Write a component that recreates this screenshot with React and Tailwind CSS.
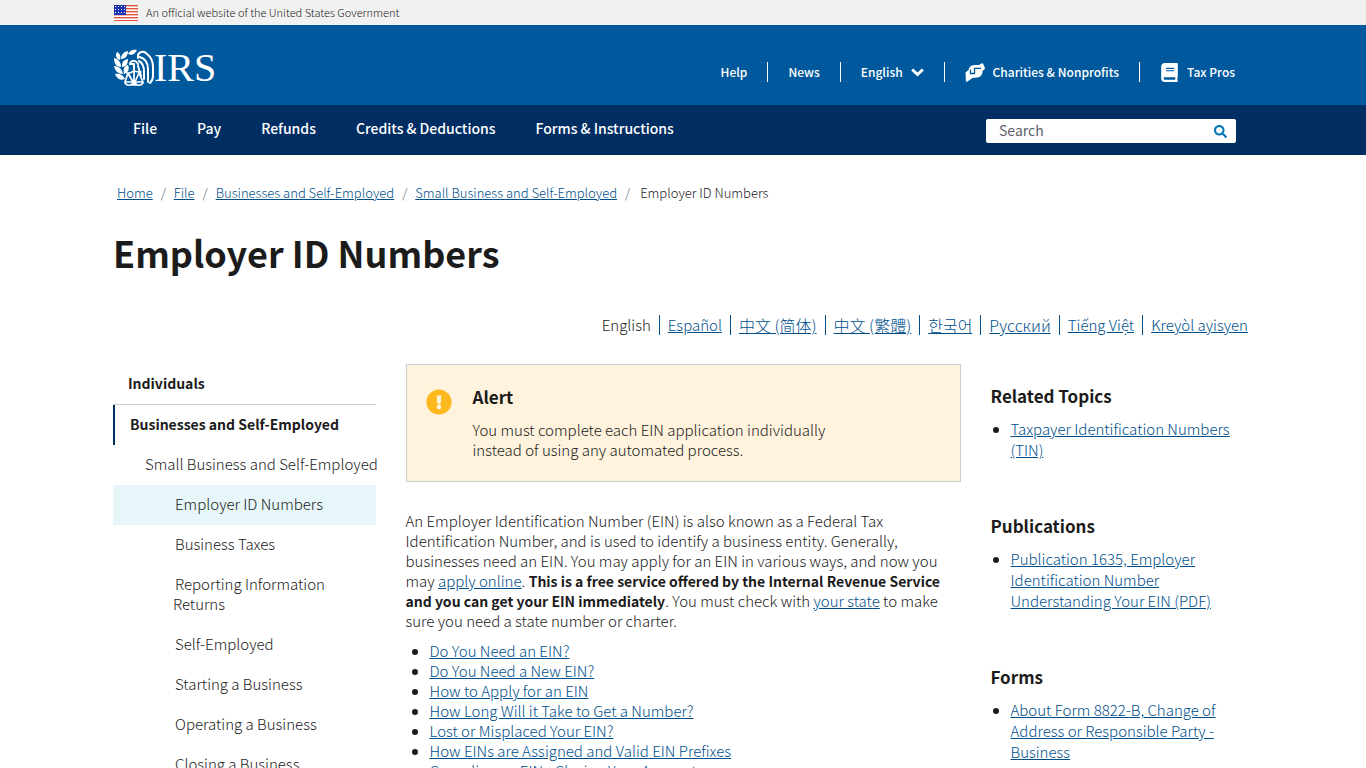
import React, { useState } from "react";
import { FaBook, FaExclamationCircle, FaSearch } from "react-icons/fa";

const mainLinks = [
  "File",
  "Pay",
  "Refunds",
  "Credits & Deductions",
  "Forms & Instructions",
];

const breadcrumbs = [
  "Home",
  "File",
  "Businesses and Self-Employed",
  "Small Business and Self-Employed",
];

const languages = [
  { label: "Español", lang: "es" },
  { label: "中文 (简体)", lang: "zh-Hans", wide: true },
  { label: "中文 (繁體)", lang: "zh-Hant", wide: true },
  { label: "한국어", lang: "ko", wide: true },
  { label: "Русский", lang: "ru", wide: true },
  { label: "Tiếng Việt", lang: "vi" },
  { label: "Kreyòl ayisyen", lang: "ht" },
];

const sideLinks = [
  "Business Taxes",
  "Reporting Information Returns",
  "Self-Employed",
  "Starting a Business",
  "Operating a Business",
  "Closing a Business",
];

const topics = [
  "Do You Need an EIN?",
  "Do You Need a New EIN?",
  "How to Apply for an EIN",
  "How Long Will it Take to Get a Number?",
  "Lost or Misplaced Your EIN?",
  "How EINs are Assigned and Valid EIN Prefixes",
  "Canceling an EIN - Closing Your Account",
];

const related = [
  { title: "Related Topics", link: "Taxpayer Identification Numbers (TIN)" },
  {
    title: "Publications",
    link: "Publication 1635, Employer Identification Number Understanding Your EIN (PDF)",
  },
  {
    title: "Forms",
    link: "About Form 8822-B, Change of Address or Responsible Party - Business",
  },
];

const Flag = () => (
  <svg className="h-4 w-6" viewBox="0 0 24 16" aria-hidden="true">
    <rect width="24" height="16" fill="#fff" />
    {[0, 3, 6, 9, 12, 15].map((y) => (
      <rect key={y} y={y} width="24" height="1.4" fill="#e0533d" />
    ))}
    <rect width="12" height="10" fill="#1e33b1" />
    {[1, 4, 7].map((y) =>
      [1, 4, 7, 10].map((x) => (
        <rect key={`${x}-${y}`} x={x} y={y} width="1" height="1" fill="#fff" />
      ))
    )}
  </svg>
);

const Eagle = () => (
  <svg
    className="h-[38px] w-[40px]"
    viewBox="0 0 40 38"
    fill="none"
    stroke="#fff"
    strokeLinecap="round"
    strokeLinejoin="round"
    aria-hidden="true"
  >
    {/* olive branch */}
    <g fill="#fff" stroke="none">
      <path d="M3 3c3 1 4 5 3 8-4-1-5-5-3-8z" />
      <path d="M0 9c5 1 7 5 7 9-5 0-7-4-7-9z" />
      <path d="M0 17c5 0 8 3 9 8-5 0-8-3-9-8z" />
      <path d="M1 25c5-1 8 1 10 5-4 2-8 0-10-5z" />
      <path d="M7 10c0-4 2-7 7-8 0 5-3 8-7 8z" />
      <path d="M14 5c2-4 5-5 9-4-2 4-5 6-9 4z" />
      <path d="M8 18c0-5 1-7 6-8 0 5-2 8-6 8z" />
      <path d="M10 25c-1-5 0-8 4-9 2 4 0 8-4 9z" />
    </g>
    {/* head, wing and feathers */}
    <path
      strokeWidth="2"
      d="M16 14c2-3 6-3 8 1M16 15h4M20 15v4M24 9c-1-6 5-8 9-4 4 3 6 8 6 13v9c0 3-1 5-3 7M25 8c6 1 9 6 9 12v13M25 12c4 2 5 6 5 11v7M24 17l3 10"
    />
    {/* scales */}
    <path
      strokeWidth="1.7"
      d="M13 24c3 1 4-1 7-2 3 1 4 1 7 1M20 18v17M14 24l-3 9h8zM25 24l-4 9h8zM11 34c2 3 6 3 8 0M21 34c2 3 6 3 8 0M17 36h6"
    />
  </svg>
);

const ChevronDown = () => (
  <svg width="13" height="9" viewBox="0 0 13 9" fill="none" aria-hidden="true">
    <path d="M1.200 1.500l5.300 5 5.300-5" stroke="currentColor" strokeWidth="3" />
  </svg>
);

const HelpingHands = () => (
  <svg width="20" height="19" viewBox="0 0 20 19" aria-hidden="true">
    <path
      fill="currentColor"
      d="M.5 9.500L3.500 7C4 4 6 2.200 9 2h5l3-1.700c.5-.3 1 0 1.200.4L19.900 5c.2.500 0 1-.4 1.300L17.500 8c0 4-2 6.200-5.500 6.500L7.500 15 2.500 18.500c-.7.500-1.500.2-1.600-.6z"
    />
    <path d="M5.500 6.500v4h4V5.300H16" fill="none" stroke="#00599c" strokeWidth="1.300" />
  </svg>
);

const TextLink = ({ children, ...props }) => (
  <a href="#" className="text-[#004f8b] underline" {...props}>
    {children}
  </a>
);

const Header = () => {
  const [query, setQuery] = useState("");

  return (
    <header>
      <div className="bg-[#f1f1f1]">
        <div className="mx-auto flex h-[25px] max-w-[1140px] items-center gap-2 px-px text-[11px]">
          <Flag />
          <span className="pb-0.5 font-light leading-5">
            An official website of the United States Government
          </span>
        </div>
      </div>

      <div className="bg-[#00599c] text-white">
        <div className="mx-auto flex h-20 max-w-[1140px] items-center justify-between pl-px pr-[18px] pt-2">
          <a href="#" aria-label="IRS" className="flex items-center pb-0.5">
            <Eagle />
            <span className="font-['Liberation_Serif',serif] text-[40px] leading-9">
              IRS
            </span>
          </a>
          <nav aria-label="Utility" className="mt-1.5 flex text-[12px] font-medium leading-5">
            <a href="#" className="border-r border-white pr-5">
              Help
            </a>
            <a href="#" className="border-r border-white px-5">
              News
            </a>
            <button
              type="button"
              className="flex items-center gap-2 border-r border-white px-5"
            >
              English
              <ChevronDown />
            </button>
            <a
              href="#"
              className="flex items-center gap-2 border-r border-white px-5"
            >
              <HelpingHands />
              Charities &amp; Nonprofits
            </a>
            <a href="#" className="flex items-center gap-2 pl-5">
              <FaBook size={19} />
              Tax Pros
            </a>
          </nav>
        </div>
      </div>

      <div className="bg-[#002d62] text-white">
        <div className="mx-auto flex h-[50px] max-w-[1140px] items-center justify-between pl-5 pr-[17px]">
          <nav aria-label="Main" className="flex gap-10 pb-1 text-[14px] font-medium">
            {mainLinks.map((label) => (
              <a key={label} href="#">
                {label}
              </a>
            ))}
          </nav>
          <form
            onSubmit={(e) => e.preventDefault()}
            className="mt-0.5 flex h-6 w-[250px] items-center rounded-xs bg-white pl-[13px] pr-[9px]"
          >
            <input
              type="text"
              aria-label="Search"
              placeholder="Search"
              value={query}
              onChange={(e) => setQuery(e.target.value)}
              className="min-w-0 flex-1 pb-0.5 text-[14px] leading-5 text-[#1b1b1b] outline-none placeholder:text-[#5b616b]"
            />
            <button type="submit" aria-label="Submit search">
              <FaSearch size={13} color="#0076b8" />
            </button>
          </form>
        </div>
      </div>
    </header>
  );
};

const SideNav = () => (
  <nav aria-label="Section" className="text-[15px] font-light leading-5">
    <a href="#" className="block border-b border-[#cbccce] px-[15px] pb-[11px] pt-[9px] text-[14px] font-bold">
      Individuals
    </a>
    <a href="#" className="block border-l-2 border-[#002d62] px-[15px] pb-[11px] pt-[9px] text-[14px] font-bold">
      Businesses and Self-Employed
    </a>
    <a href="#" className="block whitespace-nowrap pb-[11px] pl-8 pt-[9px]">
      Small Business and Self-Employed
    </a>
    <a href="#" aria-current="page" className="block bg-[#e7f6f8] pb-[11px] pl-[62px] pt-[9px]">
      Employer ID Numbers
    </a>
    {sideLinks.map((label) => (
      <a key={label} href="#" className="block pb-[11px] pl-[60px] pr-10 pt-[9px] indent-[2px]">
        {label}
      </a>
    ))}
  </nav>
);

const App = () => {
  return (
    <div className="bg-white font-['Noto_Sans_CJK_SC',sans-serif] text-[#1b1b1b]">
      <Header />

      <main className="mx-auto max-w-[1140px]">
        <nav aria-label="Breadcrumb" className="pl-1 pt-7">
          <ol className="flex text-[13px] font-light leading-5">
            {breadcrumbs.map((label) => (
              <li key={label}>
                <TextLink>{label}</TextLink>
                <span className="px-2 text-[#5b616b]">/</span>
              </li>
            ))}
            <li className="pl-0.5">Employer ID Numbers</li>
          </ol>
        </nav>

        <h1 className="mt-[25px] text-[36px] font-bold leading-[48px]">
          Employer ID Numbers
        </h1>

        <ul className="mt-[39px] flex justify-end pr-[5px] text-[15px] font-light leading-5">
          <li className="pr-2">English</li>
          {languages.map(({ label, lang, wide }) => (
            <li
              key={lang}
              className={`border-l border-[#004f8b] px-2 last:pr-0 ${
                wide ? "text-[16px]" : ""
              }`}
            >
              <TextLink lang={lang}>{label}</TextLink>
            </li>
          ))}
        </ul>

        <div className="mt-[29px] grid grid-cols-4 gap-[30px]">
          <SideNav />

          <div className="col-span-2 text-[15px] font-light leading-5">
            <section className="flex gap-[21px] border border-[#cbccce] bg-[#fff3de] px-[19px] pb-[21px] pt-5">
              <FaExclamationCircle size={26} color="#fdb81e" className="mt-1 shrink-0" />
              <div className="max-w-[370px]">
                <h2 className="text-[17px] font-bold leading-6">Alert</h2>
                <p className="mt-[11px]">
                  You must complete each EIN application individually instead of
                  using any automated process.
                </p>
              </div>
            </section>

            <p className="mt-[29px]">
              An Employer Identification Number (EIN) is also known as a Federal
              Tax Identification Number, and is used to identify a business
              entity. Generally, businesses need an EIN. You may apply for an
              EIN in various ways, and now you may{" "}
              <TextLink>apply online</TextLink>.{" "}
              <strong className="text-[14px] font-bold">
                This is a free service offered by the Internal Revenue Service
                and you can get your EIN immediately
              </strong>
              . You must check with <TextLink>your state</TextLink> to make sure
              you need a state number or charter.
            </p>

            <ul className="mt-[10px] list-disc pl-6">
              {topics.map((label) => (
                <li key={label}>
                  <TextLink>{label}</TextLink>
                </li>
              ))}
            </ul>
          </div>

          <aside className="flex flex-col gap-[54px] pt-5 text-[15px] font-light">
            {related.map(({ title, link }) => (
              <section key={title}>
                <h2 className="text-[17px] font-bold leading-6">{title}</h2>
                <ul className="mt-[10px] list-disc pl-5 leading-[21px]">
                  <li>
                    <TextLink>{link}</TextLink>
                  </li>
                </ul>
              </section>
            ))}
          </aside>
        </div>
      </main>
    </div>
  );
};

export default App;
